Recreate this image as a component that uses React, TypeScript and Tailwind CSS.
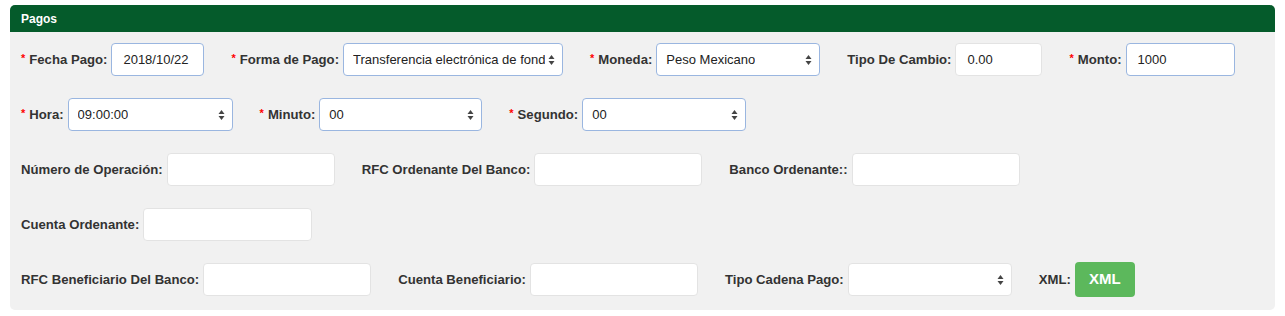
import React from 'react';

function Label({ text, required }: { text: string; required?: boolean }) {
  return (
    <label className="mr-[4px] whitespace-nowrap text-[13.15px] font-bold text-[#333]">
      {required && <span className="mr-[4px] text-[#ff0000] text-[11px] align-top">*</span>}
      {text}
    </label>
  );
}

function TextBox({ value, width, blue }: { value?: string; width: string; blue?: boolean }) {
  return (
    <div
      className={`flex h-[33px] items-center rounded-[4px] border bg-white px-[11px] text-[13px] text-[#222] ${width} ${
        blue ? 'border-[#9ab6e0]' : 'border-[#e3e3e3]'
      }`}
    >
      {value}
    </div>
  );
}

function SelectBox({ value, width, blue }: { value?: string; width: string; blue?: boolean }) {
  return (
    <div
      className={`flex h-[33px] items-center justify-between rounded-[4px] border bg-white pl-[9px] pr-[7px] text-[13px] text-[#222] ${width} ${
        blue ? 'border-[#9ab6e0]' : 'border-[#e3e3e3]'
      }`}
    >
      <span className="overflow-hidden whitespace-nowrap">{value}</span>
      <svg width="7" height="12" viewBox="0 0 7 12" className="shrink-0">
        <path d="M3.5 1 L6.5 5 L0.5 5 Z" fill="#444" />
        <path d="M3.5 11 L6.5 7 L0.5 7 Z" fill="#444" />
      </svg>
    </div>
  );
}

function Field({ children }: { children: React.ReactNode }) {
  return <div className="flex items-center">{children}</div>;
}

export default function App() {
  return (
    <div className="h-[316px] w-[1285px] bg-white pt-[5px] font-['Liberation_Sans',Arial,sans-serif]">
      <div className="mx-[10px] overflow-hidden rounded-[5px] bg-[#f1f1f1]">
        {/* Header */}
        <div className="flex h-[27px] items-center bg-[#055b2b] px-[11px] text-[12px] font-bold text-white">Pagos</div>

        {/* Body */}
        <div className="flex flex-col gap-[22px] px-[11px] pb-[14px] pt-[11px]">
          <div className="flex h-[33px] items-center gap-[27px]">
            <Field>
              <Label text="Fecha Pago:" required />
              <TextBox value="2018/10/22" width="w-[93px]" blue />
            </Field>
            <Field>
              <Label text="Forma de Pago:" required />
              <SelectBox value="Transferencia electrónica de fond" width="w-[220px]" blue />
            </Field>
            <Field>
              <Label text="Moneda:" required />
              <SelectBox value="Peso Mexicano" width="w-[164px]" blue />
            </Field>
            <Field>
              <Label text="Tipo De Cambio:" />
              <TextBox value="0.00" width="w-[87px]" />
            </Field>
            <Field>
              <Label text="Monto:" required />
              <TextBox value="1000" width="w-[109px]" blue />
            </Field>
          </div>

          <div className="flex h-[33px] items-center gap-[27px]">
            <Field>
              <Label text="Hora:" required />
              <SelectBox value="09:00:00" width="w-[165px]" blue />
            </Field>
            <Field>
              <Label text="Minuto:" required />
              <SelectBox value="00" width="w-[163px]" blue />
            </Field>
            <Field>
              <Label text="Segundo:" required />
              <SelectBox value="00" width="w-[164px]" blue />
            </Field>
          </div>

          <div className="flex h-[33px] items-center gap-[27px]">
            <Field>
              <Label text="Número de Operación:" />
              <TextBox width="w-[168px]" />
            </Field>
            <Field>
              <Label text="RFC Ordenante Del Banco:" />
              <TextBox width="w-[168px]" />
            </Field>
            <Field>
              <Label text="Banco Ordenante::" />
              <TextBox width="w-[168px]" />
            </Field>
          </div>

          <div className="flex h-[33px] items-center gap-[27px]">
            <Field>
              <Label text="Cuenta Ordenante:" />
              <TextBox width="w-[169px]" />
            </Field>
          </div>

          <div className="flex h-[33px] items-center gap-[27px]">
            <Field>
              <Label text="RFC Beneficiario Del Banco:" />
              <TextBox width="w-[168px]" />
            </Field>
            <Field>
              <Label text="Cuenta Beneficiario:" />
              <TextBox width="w-[168px]" />
            </Field>
            <Field>
              <Label text="Tipo Cadena Pago:" />
              <SelectBox width="w-[164px]" />
            </Field>
            <Field>
              <Label text="XML:" />
              <button className="flex h-[35px] w-[60px] items-center justify-center rounded-[4px] bg-[#5cb85c] text-[15px] font-bold text-white">
                XML
              </button>
            </Field>
          </div>
        </div>
      </div>
    </div>
  );
}
